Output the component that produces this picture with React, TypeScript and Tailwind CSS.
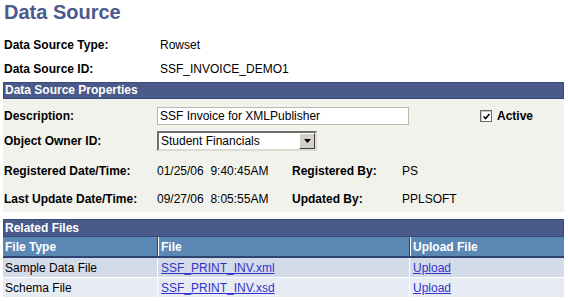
const label = 'font-bold text-[12px] text-black';
const value = 'text-[12px] text-black';

function InfoRow({ name, val }: { name: string; val: string }) {
  return (
    <div className="flex items-center h-[24px] pl-[4px]">
      <span className={`${label} w-[156px]`}>{name}</span>
      <span className={value}>{val}</span>
    </div>
  );
}

export default function App() {
  const files = [
    { type: 'Sample Data File', file: 'SSF_PRINT_INV.xml' },
    { type: 'Schema File', file: 'SSF_PRINT_INV.xsd' },
  ];

  return (
    <div className="w-[568px] h-[301px] bg-white overflow-hidden font-['Liberation_Sans',Arial,sans-serif]">
      <h1 className="pl-[4px] pt-[1px] h-[33px] text-[20px] font-bold text-[#4b5a8e] leading-[22px]">
        Data Source
      </h1>
      <InfoRow name="Data Source Type:" val="Rowset" />
      <InfoRow name="Data Source ID:" val="SSF_INVOICE_DEMO1" />

      <div className="mx-[3px] mt-[1px] w-[561px]">
        <div className="h-[17px] bg-[#4a5a8b] border border-[#3a4a7a] text-white font-bold text-[12px] leading-[15px] pl-[1px]">
          Data Source Properties
        </div>
        <div className="bg-[#f2f2ed] h-[113px] pt-[7px]">
          <div className="flex items-center h-[20px] pl-[1px]">
            <span className={`${label} w-[153px]`}>Description:</span>
            <div className="w-[252px] h-[18px] bg-white border border-[#b9b9b0] text-[12px] leading-[16px] pl-[2px]">
              SSF Invoice for XMLPublisher
            </div>
            <label className="flex items-center ml-[71px] gap-[5px]">
              <span className="w-[12px] h-[12px] border border-[#6a6a6a] bg-white flex items-center justify-center shadow-[inset_1px_1px_0_#c8c8c0]">
                <svg width="9" height="9" viewBox="0 0 9 9">
                  <path d="M1.5 4.5 L3.5 6.5 L7.5 2" stroke="black" strokeWidth="1.6" fill="none" />
                </svg>
              </span>
              <span className={label}>Active</span>
            </label>
          </div>
          <div className="flex items-center h-[20px] pl-[1px] mt-[5px]">
            <span className={`${label} w-[153px]`}>Object Owner ID:</span>
            <div className="w-[160px] h-[20px] bg-white border-2 border-t-[#6e6e6e] border-l-[#6e6e6e] border-r-[#dcdcd4] border-b-[#dcdcd4] flex items-center">
              <span className="flex-1 text-[12px] pl-[2px]">Student Financials</span>
              <span className="w-[16px] h-[16px] bg-[#d4d0c8] border border-t-white border-l-white border-r-[#404040] border-b-[#404040] flex items-center justify-center">
                <svg width="7" height="4" viewBox="0 0 7 4">
                  <path d="M0 0 H7 L3.5 4 Z" fill="black" />
                </svg>
              </span>
            </div>
          </div>
          <div className="flex items-center h-[21px] pl-[1px] mt-[9px]">
            <span className={`${label} w-[153px]`}>Registered Date/Time:</span>
            <span className={`${value} w-[135px] whitespace-pre`}>01/25/06  9:40:45AM</span>
            <span className={`${label} w-[110px]`}>Registered By:</span>
            <span className={value}>PS</span>
          </div>
          <div className="flex items-center h-[21px] pl-[1px] mt-[7px]">
            <span className={`${label} w-[153px]`}>Last Update Date/Time:</span>
            <span className={`${value} w-[135px] whitespace-pre`}>09/27/06  8:05:55AM</span>
            <span className={`${label} w-[110px]`}>Updated By:</span>
            <span className={value}>PPLSOFT</span>
          </div>
        </div>

        <div className="mt-[7px] h-[18px] bg-[#4a5a8b] border border-[#3a4a7a] text-white font-bold text-[12px] leading-[16px] pl-[1px]">
          Related Files
        </div>
        <div className="grid grid-cols-[155px_252px_154px] h-[21px] bg-[#5b87b5] border-b-2 border-[#2f4373] text-white font-bold text-[12px]">
          <div className="pl-[2px] flex items-center border-r border-[#2f4373]">File Type</div>
          <div className="pl-[2px] flex items-center border-l border-white border-r border-r-[#2f4373]">File</div>
          <div className="pl-[2px] flex items-center border-l border-white">Upload File</div>
        </div>
        {files.map((f, i) => (
          <div
            key={f.file}
            className={`grid grid-cols-[155px_252px_154px] h-[20px] border-b border-white text-[12px] ${
              i === 0 ? 'bg-[#d4dbe8]' : 'bg-[#e7ecf4]'
            }`}
          >
            <div className="pl-[2px] flex items-center border-r border-white">{f.type}</div>
            <div className="pl-[3px] flex items-center border-r border-white">
              <a className="text-[#3333cc] underline">{f.file}</a>
            </div>
            <div className="pl-[3px] flex items-center">
              <a className="text-[#3333cc] underline">Upload</a>
            </div>
          </div>
        ))}
      </div>
    </div>
  );
}
